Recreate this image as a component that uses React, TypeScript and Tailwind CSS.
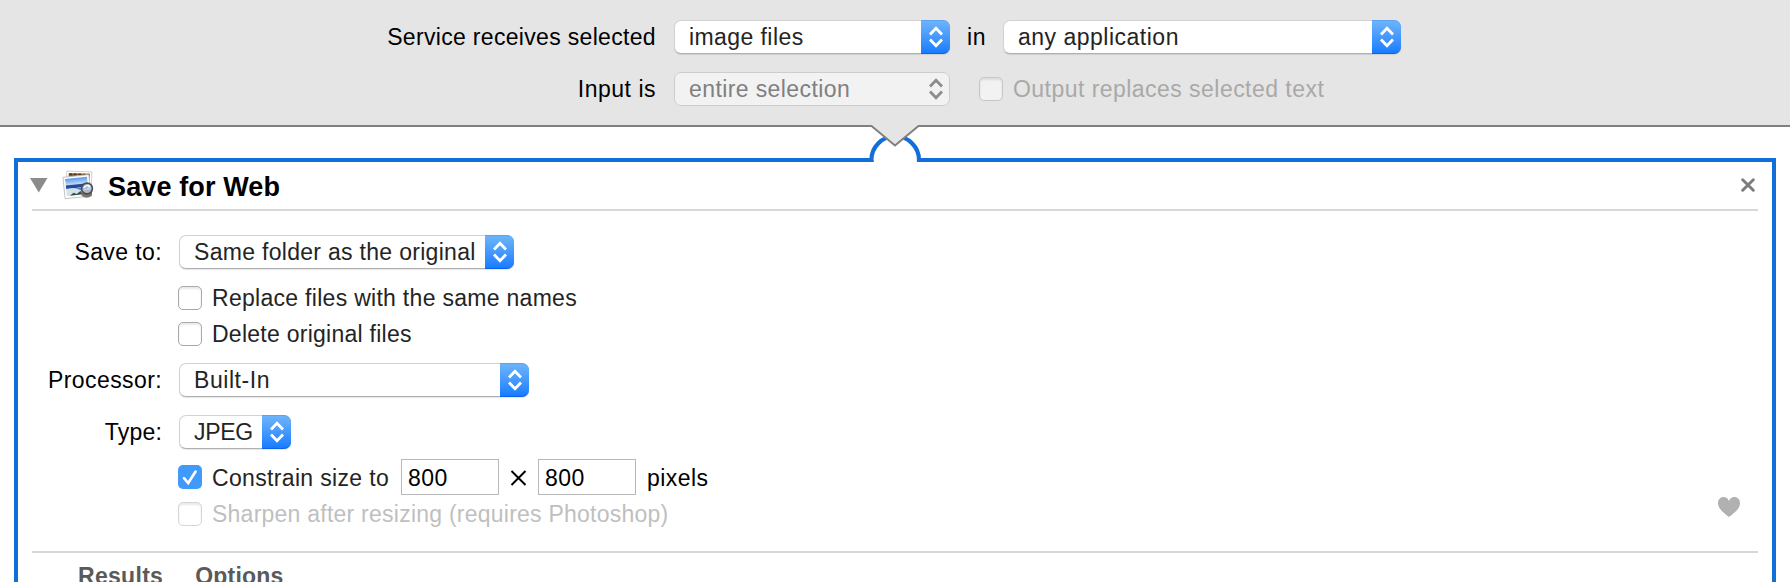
import type { ReactNode } from "react";

function Chevrons({ className }: { className: string }) {
  return (
    <svg width="14" height="22" viewBox="0 0 14 22" fill="none" strokeWidth="2.8" className={className}>
      <path d="M1 8.500 L7 2.300 L13 8.500 M1 13.500 L7 19.700 L13 13.500" />
    </svg>
  );
}

function Select({ className, disabled, children }: { className: string; disabled?: boolean; children: ReactNode }) {
  const box = disabled
    ? "border-[#cdcdcd] bg-[#f2f2f2] text-[#808080]"
    : "border-[#d2d2d2] border-b-[#b0b0b0] bg-white text-[#242424] shadow-[0_1px_1px_rgba(0,0,0,0.10)]";
  return (
    <div className={`relative flex h-[34px] shrink-0 items-center rounded-[7px] border pl-[14px] ${box} ${className}`}>
      {children}
      <div
        className={
          disabled
            ? "absolute -top-px -right-px flex h-[34px] w-[29px] items-center justify-center"
            : "absolute -top-px -right-px flex h-[34px] w-[29px] items-center justify-center rounded-r-[7px] border-t border-b border-t-[#5ba3f0] border-b-[#0f62ee] bg-linear-to-b from-[#6cb3fa] to-[#147cff]"
        }
      >
        <Chevrons className={disabled ? "stroke-[#8c8c8c]" : "stroke-white"} />
      </div>
    </div>
  );
}

function Checkbox({ checked, disabled, gray }: { checked?: boolean; disabled?: boolean; gray?: boolean }) {
  if (checked) {
    return (
      <div className="flex size-6 shrink-0 items-center justify-center rounded-[5px] bg-[#3f9afb]">
        <svg width="24" height="24" viewBox="0 0 24 24" fill="none" stroke="#fff" strokeWidth="2.6" strokeLinecap="round">
          <path d="M6 13.200 L10.200 18 L17.600 6.500" />
        </svg>
      </div>
    );
  }
  const tone = gray
    ? "border-[#c6c6c6] bg-[#f2f2f2]"
    : disabled
      ? "border-[#d6d6d6] bg-white"
      : "border-[#a8a8a8] bg-white";
  return <div className={`size-6 shrink-0 rounded-[5px] border shadow-[inset_0_2px_2px_rgba(0,0,0,0.09)] ${tone}`} />;
}

function PhotosIcon() {
  return (
    <svg width="34" height="32" viewBox="0 0 34 32" className="shrink-0">
      <defs>
        <linearGradient id="sky" x1="0" y1="0" x2="0" y2="1">
          <stop offset="0" stopColor="#5b9be8" />
          <stop offset="1" stopColor="#d4e8fb" />
        </linearGradient>
      </defs>
      <g transform="rotate(2 18 12)">
        <rect x="5.500" y="2.500" width="25" height="20" fill="#fff" stroke="#c4c4c4" strokeWidth="0.8" />
        <rect x="7.500" y="4.500" width="21" height="16" fill="#8a6434" />
        <path d="M8 5.500 H28" stroke="#5c3c18" strokeWidth="2" strokeDasharray="3 1.500" />
      </g>
      <g transform="rotate(-6 15 18)">
        <rect x="3" y="7" width="26" height="21.500" fill="#fff" stroke="#b8b8b8" strokeWidth="0.8" />
        <rect x="5" y="9" width="22" height="7.500" fill="url(#sky)" />
        <rect x="5" y="15.500" width="22" height="3.500" fill="#27489b" />
        <path d="M5 19 H27 V26 H5 Z" fill="#d3e4f1" />
        <path d="M5 19 L14 19 L20 22 L27 20 V19 Z" fill="#5a80bd" />
        <path d="M8 26 L12 23.500 L15 25 L19 22.500 L21 26 Z" fill="#35523f" />
      </g>
      <path d="M20.500 22 V26.500 Q25.500 31 31 26.500 V20 Z" fill="#7d7366" />
      <circle cx="26" cy="19.500" r="5.400" fill="#b9cbe4" fillOpacity="0.8" stroke="#4c4c50" strokeWidth="1.600" />
      <path d="M22.800 19 Q25 15 29 17.500" stroke="#fff" strokeWidth="1.500" fill="none" />
    </svg>
  );
}

export default function App() {
  return (
    <div className="relative flex h-[582px] w-[1790px] flex-col overflow-hidden bg-white font-['Liberation_Sans',Arial,sans-serif] text-[23px] leading-[34px] whitespace-nowrap text-black">
      <header className="flex h-[127px] shrink-0 flex-col gap-[18px] border-b-2 border-[#808080] bg-[#e5e5e5] pt-5">
        <div className="flex h-[34px] items-center">
          <div className="w-[656px] shrink-0 text-right tracking-[0.32px]">Service receives selected</div>
          <Select className="ml-[18px] w-[276px] tracking-[0.42px]">image files</Select>
          <div className="ml-[17px] w-[36px] tracking-[0.6px]">in</div>
          <Select className="w-[398px] tracking-[0.5px]">any application</Select>
        </div>
        <div className="flex h-[34px] items-center">
          <div className="w-[656px] shrink-0 text-right tracking-[0.5px]">Input is</div>
          <Select disabled className="ml-[18px] w-[276px] tracking-[0.4px]">entire selection</Select>
          <div className="ml-[29px] flex items-center gap-[10px] text-[#a9a9a9]">
            <Checkbox gray />
            <span className="tracking-[0.46px]">Output replaces selected text</span>
          </div>
        </div>
      </header>

      <main className="mt-[31px] ml-[14px] flex h-[440px] w-[1762px] shrink-0 flex-col border-4 border-[#126ed8] bg-white px-[14px]">
        <div className="flex h-[49px] shrink-0 items-center border-b-2 border-[#d8d8d8]">
          <svg width="18" height="15" viewBox="0 0 18 15" className="-ml-[2px]">
            <path d="M0 0 H17.500 L8.750 14.500 Z" fill="#8c8c8c" />
          </svg>
          <div className="ml-[13px] -mt-px"><PhotosIcon /></div>
          <h1 className="ml-[13px] pt-[3px] text-[27px] font-bold tracking-[0.12px]">Save for Web</h1>
          <svg width="14" height="14" viewBox="0 0 14 14" className="mr-[3px] mb-px ml-auto" stroke="#7b7b7b" strokeWidth="2.900" strokeLinecap="round">
            <path d="M1.700 1.700 L12.300 12.300 M12.300 1.700 L1.700 12.300" />
          </svg>
        </div>

        <div className="relative flex h-[342px] shrink-0 flex-col border-b-2 border-[#d8d8d8] pt-6">
          <div className="flex h-[34px] items-center">
            <div className="w-[130px] text-right tracking-[0.4px]">Save to:</div>
            <Select className="ml-[17px] w-[335px] tracking-[0.3px]">Same folder as the original</Select>
          </div>
          <div className="mt-[17px] ml-[146px] flex h-6 items-center gap-[10px] text-[#242424]">
            <Checkbox />
            <span className="tracking-[0.29px]">Replace files with the same names</span>
          </div>
          <div className="mt-3 ml-[146px] flex h-6 items-center gap-[10px] text-[#242424]">
            <Checkbox />
            <span className="tracking-[0.26px]">Delete original files</span>
          </div>
          <div className="mt-[17px] flex h-[34px] items-center">
            <div className="w-[130px] text-right tracking-[0.4px]">Processor:</div>
            <Select className="ml-[17px] w-[350px] tracking-[0.55px]">Built-In</Select>
          </div>
          <div className="mt-[18px] flex h-[34px] items-center">
            <div className="w-[130px] text-right tracking-[0.2px]">Type:</div>
            <Select className="ml-[17px] w-[112px] tracking-[-0.3px]">JPEG</Select>
          </div>
          <div className="mt-[10px] ml-[146px] flex h-9 items-center">
            <Checkbox checked />
            <span className="ml-[10px] w-[189px] shrink-0 pt-[2px] tracking-[0.34px] text-[#242424]">Constrain size to</span>
            <div className="flex h-9 w-[98px] items-center border border-[#b8b8b8] pt-[2px] pl-[6px] tracking-[0.5px]">800</div>
            <svg width="17" height="16" viewBox="0 0 17 16" className="mx-[11px] mt-[2px]" stroke="#000" strokeWidth="2">
              <path d="M1.500 1 L15.500 15 M15.500 1 L1.500 15" />
            </svg>
            <div className="flex h-9 w-[98px] items-center border border-[#b8b8b8] pt-[2px] pl-[6px] tracking-[0.5px]">800</div>
            <span className="ml-[11px] pt-[2px] tracking-[0.45px]">pixels</span>
          </div>
          <div className="mt-[7px] ml-[146px] flex h-6 items-center gap-[10px] text-[#bfbfbf]">
            <Checkbox disabled />
            <span className="tracking-[0.24px]">Sharpen after resizing (requires Photoshop)</span>
          </div>
          <svg width="22" height="20" viewBox="0 0 22 20" className="absolute right-[18px] bottom-[34px]" fill="#b1b1b1">
            <path d="M11 20 C6 16 0 12 0 6 C0 2.500 2.500 0 5.500 0 C8.500 0 10.400 1.800 11 4.200 C11.600 1.800 13.500 0 16.500 0 C19.500 0 22 2.500 22 6 C22 12 16 16 11 20 Z" />
          </svg>
        </div>

        <div className="flex gap-[32px] pt-[6px] pl-[46px] font-bold text-[#5a5a5a]">
          <span className="tracking-[0.3px]">Results</span>
          <span className="tracking-[0.2px]">Options</span>
        </div>
      </main>

      <svg width="60" height="40" viewBox="865 124 60 40" className="absolute top-[124px] left-[865px]">
        <path d="M873.500 156 H917 V163 H873.500 Z" fill="#fff" />
        <path d="M868 160 H871.400 A23.800 23.800 0 0 1 919 160 H923" fill="#fff" stroke="#126ed8" strokeWidth="4.2" />
        <path d="M871 124 V126 L895 145.500 L919 126 V124 Z" fill="#e5e5e5" />
        <path d="M870 126 H871.500 L895 145.500 L918.500 126 H920" fill="none" stroke="#808080" strokeWidth="2" />
      </svg>
    </div>
  );
}
